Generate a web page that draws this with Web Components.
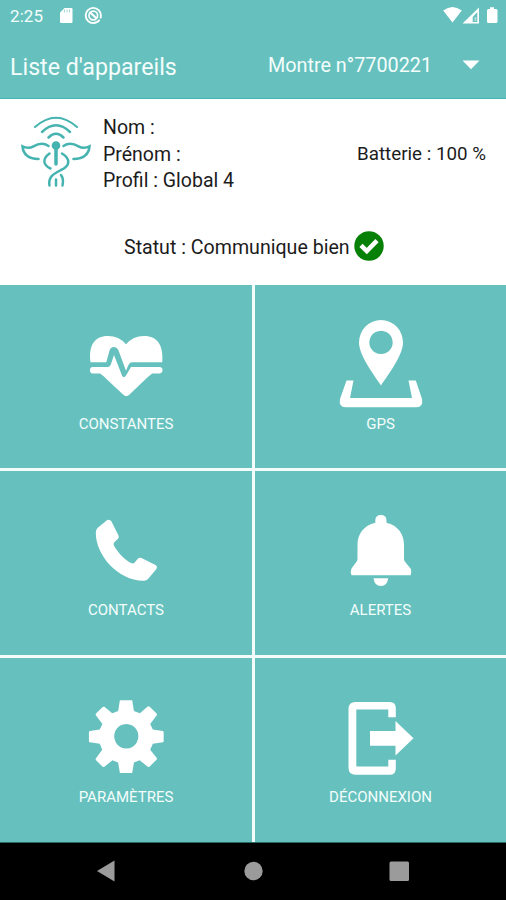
<!DOCTYPE html>
<html lang="fr">
<head>
<meta charset="utf-8">
<title>Liste d'appareils</title>
<style>
body{margin:0;width:506px;height:900px;overflow:hidden;background:#fff;font-family:Roboto,"Liberation Sans",sans-serif;--teal:#66c1be}
</style>
</head>
<body>
<device-app></device-app>
<script>
const define = (name, html) => customElements.define(name, class extends HTMLElement {
  constructor() {
    super();
    this.attachShadow({mode: 'open'}).innerHTML = html;
  }
});

define('status-bar', `
<style>
:host{display:flex;align-items:center;height:32px;padding:0 8px 0 10px;color:#f4fdfc;font-size:17px;line-height:20px}
.t{letter-spacing:.1px;width:47px}
svg{display:block}
.r{margin-left:auto}
</style>
<span class="t">2:25</span>
<svg width="48" height="32" viewBox="57 0 48 32" fill="#fff"><path d="M64.5 8h6.700q1.300 0 1.300 1.300v12.400q0 1.300-1.300 1.300H61.300q-1.300 0-1.300-1.300V12.500z"/><path d="M64.500 9.500v3M67 9.500v3M69.500 9.500v3" stroke="#a6dad8" stroke-width="1"/><circle cx="93.300" cy="15.500" r="7.600" fill="none" stroke="#fff" stroke-width="1.900" stroke-dasharray="3 1.500 43.300 0"/><circle cx="93.300" cy="15.500" r="4.300" fill="none" stroke="#fff" stroke-width="1.700"/><path d="M89.500 12l7 6.300" stroke="#fff" stroke-width="2.200"/></svg>
<svg class="r" width="58" height="32" viewBox="440 0 58 32" fill="#fff"><path d="M443.200 10.500q9.300-7 18.600 0L452.500 22.500z"/><path fill-rule="evenodd" d="M479 7.500v16h-16.500zM477.300 12l-4.600 5v5h4.600z"/><path d="M474.500 17h1.800v4h-1.800z" opacity=".5"/><path d="M490 7.200h4v1.800h2q1.500 0 1.500 1.500v11q0 1.500-1.500 1.500h-7.500q-1.500 0-1.500-1.500v-11q0-1.500 1.500-1.500h1.500z"/></svg>`);

define('app-bar', `
<style>
:host{display:flex;align-items:center;box-sizing:border-box;height:67px;padding:0 26px 0 10px;border-bottom:1px solid #43b5b2;color:#f4fdfc;line-height:28px}
.title{font-size:23.200px;width:258px;white-space:nowrap;padding-top:4px}
.pick{font-size:19.800px;white-space:nowrap;padding-top:2px}
svg{margin-left:auto}
</style>
<span class="title"><slot name="title"></slot></span><span class="pick"><slot></slot></span>
<svg width="18" height="10" viewBox="0 0 18 10"><path d="M.5.5h17L9 9.300z" fill="#fff"/></svg>`);

define('patient-card', `
<style>
:host{display:block;height:186px;color:#1c1c1c;font-size:19.500px}
.top{display:flex;height:110px;align-items:center;padding:0 20px 0 16px}
svg{display:block}
.info{margin-left:7px;padding-top:2px;line-height:26.500px;white-space:nowrap}
.bat{margin-left:auto;font-size:18.800px;white-space:nowrap}
.status{display:flex;align-items:center;height:31px;margin-top:21px;padding-left:124px;gap:4px;white-space:nowrap}
.status span{padding-top:3px;font-size:19.600px}
</style>
<div class="top">
<svg width="80" height="80" viewBox="-4 4 80 80" fill="none" stroke="#45b3af" stroke-width="2.500" stroke-linecap="round">
<path d="M15 17Q36-1.500 57 17" stroke-width="2.100"/><path d="M22 22Q36 8.500 50 22"/><path d="M28.500 27.500Q36 20 43.500 27.500"/>
<circle cx="36" cy="35.500" r="4.300" fill="#45b3af" stroke="none"/><path d="M36 37v17" stroke-width="3.500"/>
<path d="M28.500 36Q22 31.500 13.500 36.300Q8.500 39 2.500 36.300Q3.500 48.500 18.500 49M43.500 36Q50 31.500 58.500 36.300Q63.500 39 69.500 36.300Q68.500 48.500 53.500 49"/>
<path d="M29.500 43.500C22 49 23 55 30.500 58.500M42 43.500C51 49 50 56 41 60C33 64 28 67 29.500 75.500M41 65Q44 69 42.500 75.500M36 69.500v6"/></svg>
<div class="info"><div>Nom :</div><div>Prénom :</div><div>Profil : Global 4</div></div>
<div class="bat">Batterie : 100 %</div>
</div>
<div class="status"><span>Statut : Communique bien</span>
<svg width="30" height="30" viewBox="0 0 30 30"><circle cx="15" cy="15" r="14.700" fill="#078007"/><path d="M7 14.300l5.800 5.800L23 9.700" fill="none" stroke="#fff" stroke-width="4.600"/></svg></div>`);

define('menu-tile', `
<style>
:host{display:flex;flex-direction:column;align-items:center;background:var(--teal);color:#f4fdfc;font-size:15px;box-sizing:border-box;padding-top:35px}
.l{line-height:18px;margin-top:-5px;white-space:nowrap}
::slotted(svg){display:block;flex:none;width:120px;height:100px;fill:#fff}
</style>
<slot name="icon"></slot><span class="l"><slot></slot></span>`);

define('nav-bar', `
<style>
:host{display:block;height:58px;background:#000;border-top:1px solid #2c6a68;box-sizing:border-box}
svg{display:block}
</style>
<svg width="506" height="57" viewBox="0 843 506 57" fill="#9b9b9b"><path d="M97 871l17.500-10.500v21z"/><circle cx="253.500" cy="871" r="9.200"/><rect x="389.500" y="861.500" width="19.500" height="19.500" rx="1.500"/></svg>`);

define('device-app', `
<style>
:host{display:block}
header{background:var(--teal)}
main{display:grid;grid-template-columns:252px 251px;grid-template-rows:183px 184px 184px;gap:3px;height:557px;background:#f4fcfb}
</style>
<header><status-bar></status-bar><app-bar><span slot="title">Liste d'appareils</span>Montre n°7700221</app-bar></header>
<patient-card></patient-card>
<main>
<menu-tile><svg slot="icon" viewBox="-4 0 120 100"><path d="M20.500 42.300C18.500 26 24 16 38 16q11 0 18 8.300Q63 16 74 16c14 0 19.500 10 18.300 26.300H62q-2.500 0-3.700 3l-2.300 5.500-7.500-20.300q-1.500-3.500-4.700-3.500t-4.300 3.500L36.300 42.300z"/><path d="M23 47h14.500q2.500 0 3.500-3l3-9 8 20.500q1.500 3.300 4 0L61 47h28.500q3 0 3 3t-3 3.500h-7.300q-4 3-7.500 6.500L59 75q-2.700 2.300-5.400 0L37.500 60Q34 56 30 53.500h-7q-3 0-3-3.300T23 47z"/></svg>CONSTANTES</menu-tile>
<menu-tile><svg slot="icon" viewBox="-4 10 120 100"><path fill-rule="evenodd" d="M56 75.500C50 66 34 46 34 32.500a22 22.500 0 0 1 44 0C78 46 62 66 56 75.500zM56 20.700a11.700 11.700 0 1 0 .01 0z"/><path d="M21.500 70.500h7L25 88h62l-3.500-17.500h7.300L97 89q1.500 8-5.500 8.300H20.500Q13.500 97 15 89z"/></svg>GPS</menu-tile>
<menu-tile><svg slot="icon" viewBox="-4 1 120 100"><path d="M38.500 14.700q2 0 3 1.800l7 14q1 2-.7 3.400L44.500 37q-1.500 1.500-.6 3.500C48 48 54 54 61 58q2 1 3.500-.3l3.300-4q1.500-1.500 3.700-.7L85.500 60q2 1 1.300 3l-.8 1.500L78 74q-1.500 1.700-4 1.700C48 76 25.500 50 25.800 27.500q0-3 1.700-4.500L36 16q1.200-1.300 2.500-1.300z"/></svg>CONTACTS</menu-tile>
<menu-tile><svg slot="icon" viewBox="-4 1 120 100"><path d="M50.300 17.700V15.500q0-5.500 5.600-5.500t5.600 5.500v2.200C73 20.500 79 29 79 40v14q0 2.300 2 4l4.500 5.500q1.500 2.500 0 6.700H26.500q-1.500-3.500 0-6.700l4-5.500q2-1.700 2-4V40c0-11 6-19.500 17.800-22.300zM48.500 73.200h14.700q-1 7.800-7.300 7.800t-7.400-7.800z" stroke="none"/></svg>ALERTES</menu-tile>
<menu-tile><svg slot="icon" viewBox="-4.800 2.700 122 101.700"><path fill-rule="evenodd" d="M50 10h12.500l1.800 11 6 2.300 8-6.800q1-.6 2 .3l7 6.800q.8 1 0 2l-6.500 8.700 2.700 5.500 10 1.500q1 .2 1 1.300v8.900q0 1.200-1 1.300l-10 1.500-2.700 6 6.500 8.200q.8 1 0 2l-7 7q-1 .9-2 .2l-8.300-6.700-5.700 2.300-1.800 10.700H50l-1.800-10.700-5.700-2.300-8.300 6.700q-1 .7-2-.2l-6.500-6.500q-.8-1 0-2l6.300-8.700-2.500-6-10-1.500q-1-.1-1-1.300v-8.900q0-1.100 1-1.300l10-1.500 2.700-5.500-6.500-8.700q-.8-1 0-2l6.500-6.500q1-.9 2-.3l8 6.500 6-2.300zM56.500 34.200a12.300 12.500 0 1 0 .01 0z"/></svg>PARAMÈTRES</menu-tile>
<menu-tile><svg slot="icon" viewBox="-4 3 120 100"><path d="M30.500 12h34q6.300 0 6.300 6.300v8.900h-7.500V19.500H31.300v57h32v-6.800h7.500v9q0 6-6.300 6h-34q-7 0-7-7V19q0-7 7-7z"/><path d="M45 41h25.500V31L88.500 48.300 70.500 65.500V55.800H45z"/></svg>DÉCONNEXION</menu-tile>
</main>
<nav-bar></nav-bar>`);
</script>
</body>
</html>
